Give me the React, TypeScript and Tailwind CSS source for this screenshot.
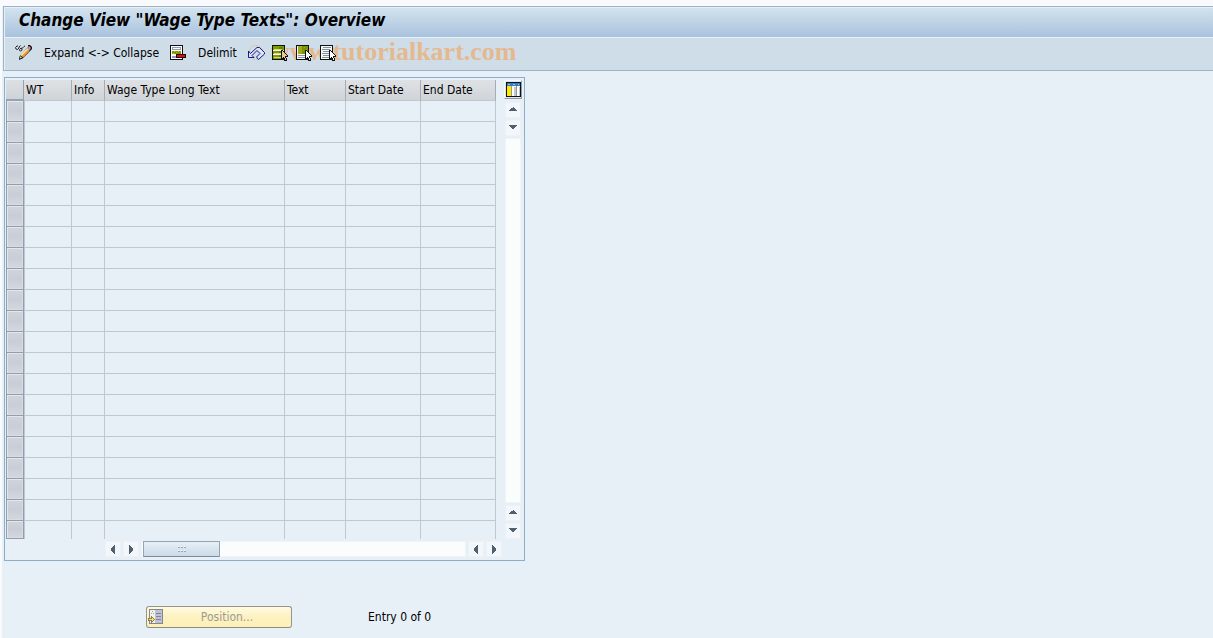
import React from "react";

const columns = [
  { label: "WT", width: "w-[48px]" },
  { label: "Info", width: "w-[33px]" },
  { label: "Wage Type Long Text", width: "w-[180px]" },
  { label: "Text", width: "w-[61px]" },
  { label: "Start Date", width: "w-[75px]" },
  { label: "End Date", width: "w-[75px]" },
];

const rows = Array.from({ length: 21 }, (_, i) => i);

export default function App() {
  return (
    <div className="min-h-screen bg-[#f8fafd] pt-[6px] pl-[2px] font-['DejaVu_Sans_Condensed','DejaVu_Sans',sans-serif] text-xs text-black">
      <div className="min-h-[632px] bg-[#e8f0f7]">
        <header className="ml-px border border-r-0 border-[#9fb2c6]">
          <h1 className="flex h-[30px] items-center border-t border-l border-[#e6f0f7] bg-linear-to-b from-[#d2e3ef] to-[#a9c2dd] pb-1 pl-[14px] text-[17px] font-bold italic">
            Change View "Wage Type Texts": Overview
          </h1>
          <Toolbar />
        </header>

        <main>
          <section className="mt-[6px] ml-[2px] w-[521px] border border-[#8eadcb] px-px pt-[2px] pb-[3px]">
            <div className="flex gap-2">
              <WageTable />
              <div className="flex w-[18px] flex-col items-center">
                <button
                  type="button"
                  aria-label="Configuration"
                  className="mb-[3px] flex h-[19px] w-[18px] items-center justify-center border border-[#f6f9fb] border-r-[#8e9baa] border-b-[#8e9baa] bg-[#dfe6ec]"
                >
                  <ColumnsIcon />
                </button>
                <div className="flex flex-1 flex-col gap-[2px]">
                  <ScrollButton label="Scroll up" direction="up" />
                  <ScrollButton label="Scroll down" direction="down" />
                  <div className="w-4 flex-1 border border-[#f0f4f8] bg-[#fbfcfc]" />
                  <ScrollButton label="Page up" direction="up" />
                  <ScrollButton label="Page down" direction="down" />
                </div>
              </div>
            </div>
            <div className="mt-[2px] ml-[99px] flex w-[397px] gap-[2px]">
              <ScrollButton label="Scroll left" direction="left" />
              <ScrollButton label="Scroll right" direction="right" />
              <div className="flex h-4 flex-1 border border-[#f0f4f8] bg-[#fbfcfc] pl-px">
                <div className="-my-px flex w-[77px] items-center justify-center rounded-[1px] border border-[#91a3b4] border-b-[#788b9c] bg-linear-to-b from-[#e6eff6] to-[#cbdbe8]">
                  <GripIcon />
                </div>
              </div>
              <ScrollButton label="Page left" direction="left" />
              <ScrollButton label="Page right" direction="right" />
            </div>
          </section>

          <footer className="mt-[45px] ml-[144px] flex items-center">
            <button
              type="button"
              className="flex h-[22px] w-[146px] items-center rounded-[3px] border border-[#96958c] border-b-[#8c8b83] bg-linear-to-b from-[#fffbe0] via-[#fdf1c0] to-[#fdf0b8] pl-px text-[#9b9b94]"
            >
              <PositionIcon />
              <span className="flex-1 text-center">Position...</span>
            </button>
            <span className="ml-[76px]">Entry 0 of 0</span>
          </footer>
        </main>
      </div>
    </div>
  );
}

function Toolbar() {
  return (
    <div className="relative flex h-[33px] items-center border-t border-l border-[#e6f0f7] bg-[#cfdde8] pb-[2px] pl-[10px]">
      <span className="absolute top-0 left-[266px] font-['Liberation_Serif',serif] text-[26px] leading-[28px] font-bold text-[#e4b98f]">
        www.tutorialkart.com
      </span>
      <button type="button" aria-label="Display / Change" className="relative">
        <PencilIcon />
      </button>
      <button type="button" className="relative ml-3">
        Expand &lt;-&gt; Collapse
      </button>
      <button type="button" aria-label="Delete" className="relative ml-[11px]">
        <DeleteIcon />
      </button>
      <button type="button" className="relative ml-3">
        Delimit
      </button>
      <button type="button" aria-label="Undo" className="relative ml-[11px]">
        <UndoIcon />
      </button>
      <div className="relative ml-[7px] flex gap-2">
        <button type="button" aria-label="Select all">
          <SelectIcon kind="all" />
        </button>
        <button type="button" aria-label="Select block">
          <SelectIcon kind="block" />
        </button>
        <button type="button" aria-label="Deselect all">
          <SelectIcon kind="none" />
        </button>
      </div>
    </div>
  );
}

function WageTable() {
  return (
    <table className="w-[490px] table-fixed border-separate border-spacing-0">
      <thead>
        <tr className="h-[21px]">
          <th
            aria-label="Selection"
            className="w-[18px] border-r border-b-2 border-[#94a3b0] bg-linear-to-b from-[#dde0e3] to-[#ced3d8] p-0"
          />
          {columns.map((c) => (
            <th
              key={c.label}
              className={`${c.width} border-r border-b border-r-[#a2adba] border-b-[#bfc7d5] bg-linear-to-b from-[#dfe2e5] to-[#cfd4d8] p-0 pl-[2px] text-left leading-[20px] font-normal whitespace-nowrap`}
            >
              {c.label}
            </th>
          ))}
        </tr>
      </thead>
      <tbody>
        {rows.map((row) => (
          <tr key={row} className="group h-[21px] last:h-[18px]">
            <td className="border border-t-0 border-[#929ead] bg-linear-to-b from-[#d0d4da] via-[#c9cdd7] to-[#d4d8dd] p-0 shadow-[inset_1px_1px_0_#e3e7eb,inset_-1px_-1px_0_#d9dde2]" />
            {columns.map((c) => (
              <td
                key={c.label}
                className="border-r border-b border-[#bfc7d5] p-0 group-last:border-b-0 nth-2:border-l"
              />
            ))}
          </tr>
        ))}
      </tbody>
    </table>
  );
}

function ScrollButton({ label, direction }: { label: string; direction: "up" | "down" | "left" | "right" }) {
  const arrows = {
    up: "M7 4h1v1h1v1h1v1h1v1H3V7h1V6h1V5h2z",
    down: "M3 4h8v1h-1v1H9v1H8v1H6V7H5V6H4V5H3z",
    left: "M9 3v9H8v-1H7v-1H6V9H5V6h1V5h1V4h1V3z",
    right: "M5 3v9h1v-1h1v-1h1V9h1V6H8V5H7V4H6V3z",
  };

  return (
    <button
      type="button"
      aria-label={label}
      className="h-4 w-4 shrink-0 border border-[#edf2f7] bg-[#f3f7fb]"
    >
      <svg width="14" height="14" viewBox="0 0 14 14" shapeRendering="crispEdges">
        <path d={arrows[direction]} fill="#51606e" />
      </svg>
    </button>
  );
}

function GripIcon() {
  return (
    <svg width="8" height="6" viewBox="0 0 8 6" shapeRendering="crispEdges">
      <path d="M0 1h2v1H0zM3 1h2v1H3zM6 1h2v1H6zM0 5h2v1H0zM3 5h2v1H3zM6 5h2v1H6z" fill="#94a7b8" />
      <path d="M0 0h1v1H0zM3 0h1v1H3zM6 0h1v1H6zM0 4h1v1H0zM3 4h1v1H3zM6 4h1v1H6z" fill="#fff" />
    </svg>
  );
}

function ColumnsIcon() {
  return (
    <svg width="15" height="15" viewBox="0 0 15 15" shapeRendering="crispEdges">
      <path d="M0 0h15v15H0z" fill="#111" />
      <path d="M1 1h13v3H1z" fill="#2f7fc1" />
      <path d="M1 4h4v10H1z" fill="#ffe900" />
      <path d="M6 4h4v10H6zM11 4h3v10h-3z" fill="#fff" />
      <path d="M8 5h2v9H8zM13 5h1v9h-1z" fill="#c3c9c9" />
      <path d="M5 4h1v10H5zM10 4h1v10h-1z" fill="#8d9a9f" />
      <path d="M2 2h2v1H2zM7 2h2v1H7zM12 2h1v1h-1z" fill="#8fc6ec" />
    </svg>
  );
}

function PencilIcon() {
  return (
    <svg width="17" height="16" viewBox="0 0 17 16">
      <path
        d="M.5 2.500L2 1h1M.5 2.500L1 4l1.500.5L4 3V2l1.500-1.500M4.500 4.500L6 3l1 .5V5L5.500 6l-1-.5zM7 3.500L9 1.500l1-.5"
        fill="none"
        stroke="#222"
        strokeWidth="1"
      />
      <path d="M13 0h2l2 2v2l-9.500 9.500L4 15l.5-3.500L13 2z" fill="#111" />
      <path d="M12 3.500L14.500 6 8 12.500 5.500 10z" fill="#f59a2d" />
      <path d="M12 3.500l1 1L6.500 11l-1-1z" fill="#ffe5a3" />
      <path d="M14 1l2 2-1 1.500L12.800 2z" fill="#e39b9b" />
      <path d="M12.500 2.300l2.500 2.500-1 1L11.500 3.300z" fill="#b9c2e9" />
      <path d="M5.500 11L7 12.500l-2 1z" fill="#fff1ce" />
    </svg>
  );
}

function DeleteIcon() {
  return (
    <svg width="16" height="16" viewBox="0 0 16 16" shapeRendering="crispEdges">
      <path d="M0 0h13v15H0z" fill="#111" />
      <path d="M1 1h11v13H1z" fill="#fff" />
      <path d="M2 2h9v3H2zM2 11h9v2H2z" fill="#9999bd" />
      <path d="M3 3h7v1H3z" fill="#fff" />
      <path d="M2 6h9v3H2z" fill="#789b00" />
      <path d="M4 6h1v1H4zM8 6h1v1H8zM6 7h1v1H6zM3 8h1v1H3z" fill="#b4c936" />
      <path d="M6 9h10v4H6z" fill="#111" />
      <path d="M7 10h8v2H7z" fill="#f00" />
    </svg>
  );
}

function UndoIcon() {
  return (
    <svg width="17" height="16" viewBox="0 0 17 16">
      <circle cx="8" cy="7.500" r="7" fill="none" stroke="#e4b995" strokeDasharray="2 1" />
      <path
        d="M.5 6v6.500H6L4 10.500l5-5 3 3L8.500 12l2 2.500 6-5.500V7.500l-5-5H9L2.500 8.500z"
        fill="#dae5ef"
        stroke="#18188a"
        strokeWidth="1"
      />
    </svg>
  );
}

function SelectIcon({ kind }: { kind: "all" | "block" | "none" }) {
  return (
    <svg width="16" height="16" viewBox="0 0 16 16" shapeRendering="crispEdges">
      <path d="M0 0h13v15H0z" fill="#111" />
      <path d="M1 1h11v13H1z" fill="#f4f8f8" />
      {kind === "all" && (
        <>
          <path d="M1 1h11v4H1zM1 6h11v3H1zM1 10h11v4H1z" fill="#839900" />
          <path d="M2 4h8v1H2zM2 8h7v1H2zM2 12h7v1H2z" fill="#d5dc78" />
          <path d="M7 2h4v2H7zM7 6h2v2H7zM7 10h2v2H7z" fill="#5e8500" />
        </>
      )}
      {kind === "block" && (
        <>
          <path d="M2 1h10v8H2z" fill="#789400" />
          <path d="M2 1h4v8H2zM8 2h1v1H8zM10 4h1v1h-1zM7 5h1v1H7z" fill="#a3a91e" />
          <path d="M2 10h7v1H2zM2 12h7v1H2z" fill="#8794a2" />
        </>
      )}
      {kind === "none" && (
        <path d="M3 2h8v1H3zM2 4h8v1H2zM3 6h6v1H3zM2 8h7v1H2zM3 10h6v1H3zM2 12h7v1H2z" fill="#8193a1" />
      )}
      <path
        d="M9 5h2v1h1v1h1v1h1v1h1v1h1v2h-2v1h1v3h-3v-2h-1v1H9z"
        fill="#111"
      />
      <path
        d="M10 6h1v1h1v1h1v1h1v1h1v1h-2v2h1v2h-1v-2h-1v-1h-1v1h-1z"
        className={kind === "all" ? "fill-[#efc394]" : "fill-white"}
      />
    </svg>
  );
}

function PositionIcon() {
  return (
    <svg width="15" height="16" viewBox="0 0 15 16" shapeRendering="crispEdges">
      <path d="M1 0h14v15H1z" fill="#85858a" />
      <path d="M2 1h5v13H2z" fill="#f2f1e8" />
      <path d="M7 1h7v13H7z" fill="#c0bfda" />
      <path d="M8 4h5v1H8zM8 7h5v1H8zM8 10h5v1H8z" fill="#85858a" />
      <path d="M4 2h1v1H4zM3 4h1v1H3zM5 4h1v1H5z" fill="#a5a5aa" />
      <path d="M0 9h3V7h1v1h1v1h1v1h1v1H6v1H5v1H4v1H3v-2H0z" fill="#85805f" />
      <path d="M1 10h3V9h1v1h1v1H5v1H4v-1H1z" fill="#ffe54f" />
    </svg>
  );
}
